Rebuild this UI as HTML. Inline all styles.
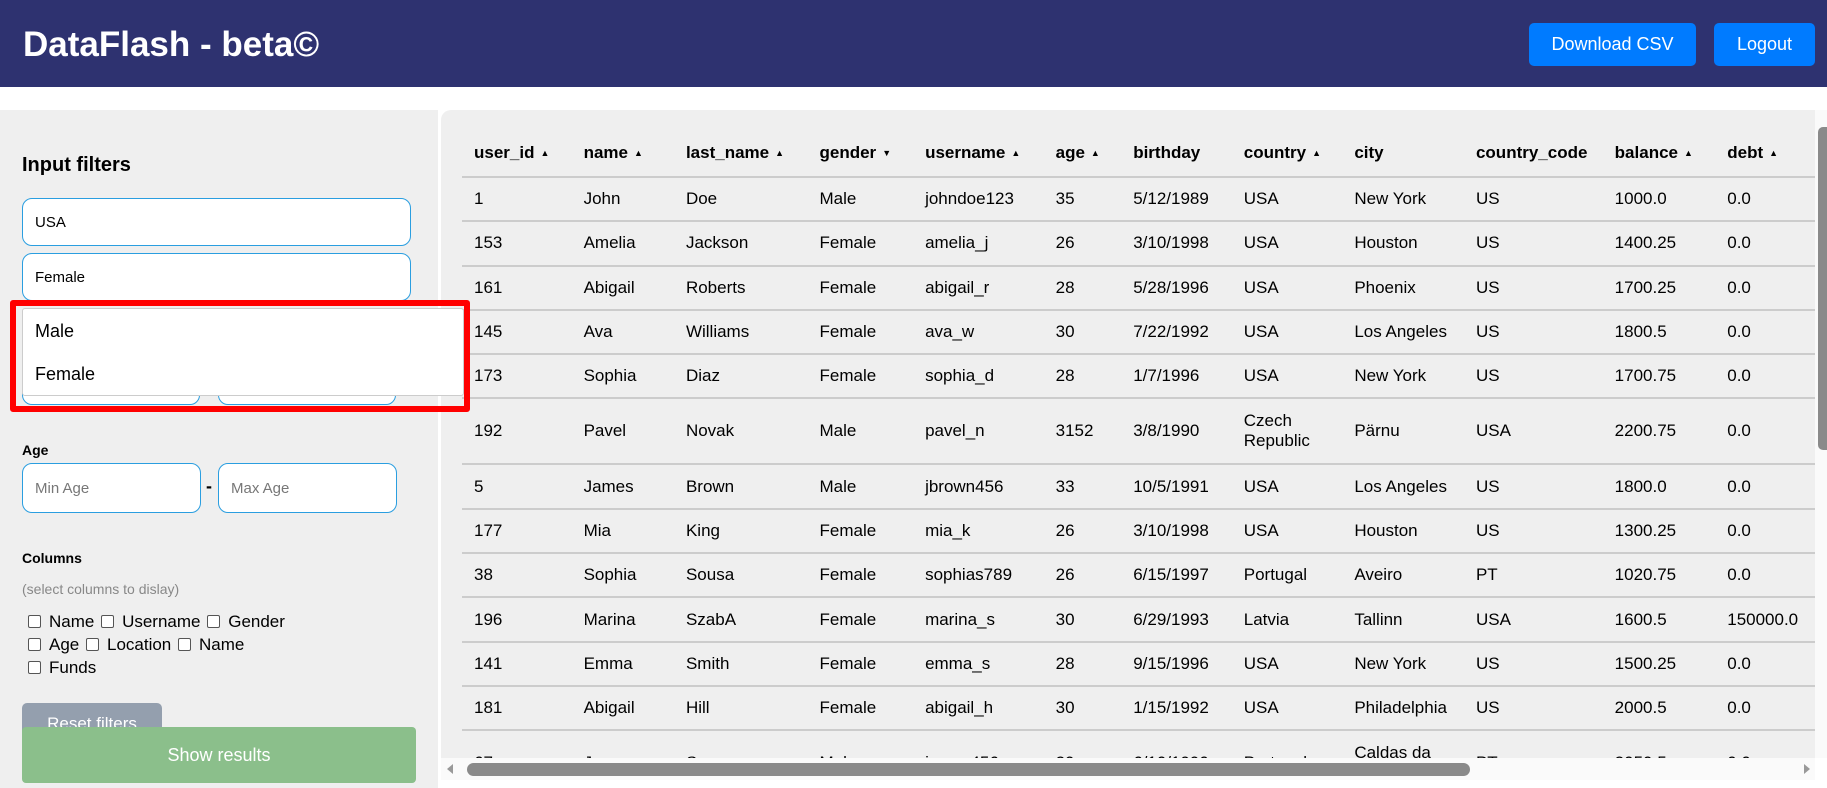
<!DOCTYPE html>
<html><head><meta charset="utf-8"><style>
*{box-sizing:border-box;margin:0;padding:0}
body{width:1827px;height:788px;overflow:hidden;background:#fff;font-family:"Liberation Sans",Arial,sans-serif;position:relative}
.hdr{position:absolute;left:0;top:0;width:1827px;height:87px;background:#2e3270}
.hdr h1{position:absolute;left:23px;top:25px;color:#fff;font-size:35px;font-weight:bold}
.btn{position:absolute;top:23px;height:43px;background:#007bff;color:#fff;border-radius:5px;font-size:18px;line-height:43px;text-align:center}
.side{position:absolute;left:0;top:110px;width:438px;height:678px;background:#efefef}
.lbl{position:absolute;left:22px;font-weight:bold;color:#000}
.inp{position:absolute;background:#fff;border:1.5px solid #2a9ee0;border-radius:10px;font-size:15px;padding-left:12px;display:flex;align-items:center}
.ph{color:#777}
.cb{position:absolute;left:26px;font-size:17px;color:#000}
.cb span{display:inline-block;width:13px;height:13px;border:1px solid #555;border-radius:2px;background:#fff;margin:0 8px 0 2px;vertical-align:-1px}
.panel{position:absolute;left:441px;top:110px;width:1374px;height:648px;background:#efefef;border-radius:10px 0 0 0;overflow:hidden}
table{position:absolute;left:21px;top:0;border-collapse:collapse;font-size:17px;color:#000}
th{font-weight:bold;text-align:left;height:67px;padding-top:20px;border-bottom:2px solid #ccc;white-space:nowrap}
td{border-bottom:2px solid #ccc;height:44.3px;vertical-align:middle}
th,td{padding-left:12px}
.ar{font-size:9px;margin-left:6px;vertical-align:2px}
</style></head><body>
<div class="hdr"><h1>DataFlash - beta©</h1>
<div class="btn" style="left:1529px;width:167px">Download CSV</div>
<div class="btn" style="left:1714px;width:101px">Logout</div></div>
<div class="side">
<div class="lbl" style="top:44px;font-size:20px">Input filters</div>
<div class="inp" style="left:22px;top:88px;width:389px;height:48px">USA</div>
<div class="inp" style="left:22px;top:143px;width:389px;height:48px">Female</div>
<div class="inp" style="left:22px;top:250px;width:178px;height:45px"></div>
<div class="inp" style="left:218px;top:250px;width:178px;height:45px"></div>
<div class="lbl" style="top:332px;font-size:14px">Age</div>
<div class="inp" style="left:22px;top:353px;width:179px;height:50px"><span class="ph">Min Age</span></div>
<div style="position:absolute;left:206px;top:366px;font-weight:bold;font-size:18px">-</div>
<div class="inp" style="left:218px;top:353px;width:179px;height:50px"><span class="ph">Max Age</span></div>
<div class="lbl" style="top:440px;font-size:14px">Columns</div>
<div style="position:absolute;left:22px;top:471px;font-size:14px;color:#888">(select columns to dislay)</div>
<div class="cb" style="top:502px"><span></span>Name <span></span>Username <span></span>Gender</div>
<div class="cb" style="top:525px"><span></span>Age <span></span>Location <span></span>Name</div>
<div class="cb" style="top:548px"><span></span>Funds</div>
<div style="position:absolute;left:22px;top:593px;width:140px;height:40px;background:#949fae;border-radius:5px;color:#fff;font-size:17px;text-align:center;padding-top:11px">Reset filters</div>
<div style="position:absolute;left:22px;top:617px;width:394px;height:56px;background:#8bbf8b;border-radius:4px;color:#fff;font-size:18px;text-align:center;line-height:56px">Show results</div>
</div>
<div class="panel"><table>
<tr><th style="width:110px">user_id<span class="ar">▲</span></th><th style="width:103px">name<span class="ar">▲</span></th><th style="width:134px">last_name<span class="ar">▲</span></th><th style="width:106px">gender<span class="ar">▼</span></th><th style="width:131px">username<span class="ar">▲</span></th><th style="width:78px">age<span class="ar">▲</span></th><th style="width:111px">birthday</th><th style="width:111px">country<span class="ar">▲</span></th><th style="width:122px">city</th><th style="width:139px">country_code</th><th style="width:113px">balance<span class="ar">▲</span></th><th style="width:100px">debt<span class="ar">▲</span></th></tr>
<tr><td>1</td><td>John</td><td>Doe</td><td>Male</td><td>johndoe123</td><td>35</td><td>5/12/1989</td><td>USA</td><td>New York</td><td>US</td><td>1000.0</td><td>0.0</td></tr>
<tr><td>153</td><td>Amelia</td><td>Jackson</td><td>Female</td><td>amelia_j</td><td>26</td><td>3/10/1998</td><td>USA</td><td>Houston</td><td>US</td><td>1400.25</td><td>0.0</td></tr>
<tr><td>161</td><td>Abigail</td><td>Roberts</td><td>Female</td><td>abigail_r</td><td>28</td><td>5/28/1996</td><td>USA</td><td>Phoenix</td><td>US</td><td>1700.25</td><td>0.0</td></tr>
<tr><td>145</td><td>Ava</td><td>Williams</td><td>Female</td><td>ava_w</td><td>30</td><td>7/22/1992</td><td>USA</td><td>Los Angeles</td><td>US</td><td>1800.5</td><td>0.0</td></tr>
<tr><td>173</td><td>Sophia</td><td>Diaz</td><td>Female</td><td>sophia_d</td><td>28</td><td>1/7/1996</td><td>USA</td><td>New York</td><td>US</td><td>1700.75</td><td>0.0</td></tr>
<tr><td style="height:66px">192</td><td>Pavel</td><td>Novak</td><td>Male</td><td>pavel_n</td><td>3152</td><td>3/8/1990</td><td>Czech<br>Republic</td><td>Pärnu</td><td>USA</td><td>2200.75</td><td>0.0</td></tr>
<tr><td>5</td><td>James</td><td>Brown</td><td>Male</td><td>jbrown456</td><td>33</td><td>10/5/1991</td><td>USA</td><td>Los Angeles</td><td>US</td><td>1800.0</td><td>0.0</td></tr>
<tr><td>177</td><td>Mia</td><td>King</td><td>Female</td><td>mia_k</td><td>26</td><td>3/10/1998</td><td>USA</td><td>Houston</td><td>US</td><td>1300.25</td><td>0.0</td></tr>
<tr><td>38</td><td>Sophia</td><td>Sousa</td><td>Female</td><td>sophias789</td><td>26</td><td>6/15/1997</td><td>Portugal</td><td>Aveiro</td><td>PT</td><td>1020.75</td><td>0.0</td></tr>
<tr><td>196</td><td>Marina</td><td>SzabA</td><td>Female</td><td>marina_s</td><td>30</td><td>6/29/1993</td><td>Latvia</td><td>Tallinn</td><td>USA</td><td>1600.5</td><td>150000.0</td></tr>
<tr><td>141</td><td>Emma</td><td>Smith</td><td>Female</td><td>emma_s</td><td>28</td><td>9/15/1996</td><td>USA</td><td>New York</td><td>US</td><td>1500.25</td><td>0.0</td></tr>
<tr><td>181</td><td>Abigail</td><td>Hill</td><td>Female</td><td>abigail_h</td><td>30</td><td>1/15/1992</td><td>USA</td><td>Philadelphia</td><td>US</td><td>2000.5</td><td>0.0</td></tr>
<tr><td style="height:66px">67</td><td>James</td><td>Sousa</td><td>Male</td><td>james456</td><td>29</td><td>6/10/1990</td><td>Portugal</td><td>Caldas da<br>Rainha</td><td>PT</td><td>2050.5</td><td>0.0</td></tr>
</table></div>
<div style="position:absolute;z-index:5;left:10px;top:300px;width:460px;height:112px;border:6px solid #f00;border-radius:3px"></div>
<div style="position:absolute;z-index:4;left:22px;top:308px;width:442px;height:88px;background:#fff;border:1px solid #ccc;border-radius:3px;font-size:18px">
<div style="position:absolute;left:12px;top:12px">Male</div><div style="position:absolute;left:12px;top:55px">Female</div></div>
<div style="position:absolute;left:441px;top:758px;width:1374px;height:22px;background:#fafafa"></div>
<div style="position:absolute;left:467px;top:763px;width:1003px;height:13px;background:#8a8a8a;border-radius:7px"></div>
<div style="position:absolute;left:447px;top:764px;width:0;height:0;border-top:5px solid transparent;border-bottom:5px solid transparent;border-right:6px solid #999"></div>
<div style="position:absolute;left:1804px;top:764px;width:0;height:0;border-top:5px solid transparent;border-bottom:5px solid transparent;border-left:6px solid #999"></div>
<div style="position:absolute;left:1815px;top:110px;width:12px;height:648px;background:#fafafa"></div>
<div style="position:absolute;left:1818px;top:127px;width:9px;height:323px;background:#8a8a8a;border-radius:5px 0 0 5px"></div>
</body></html>
